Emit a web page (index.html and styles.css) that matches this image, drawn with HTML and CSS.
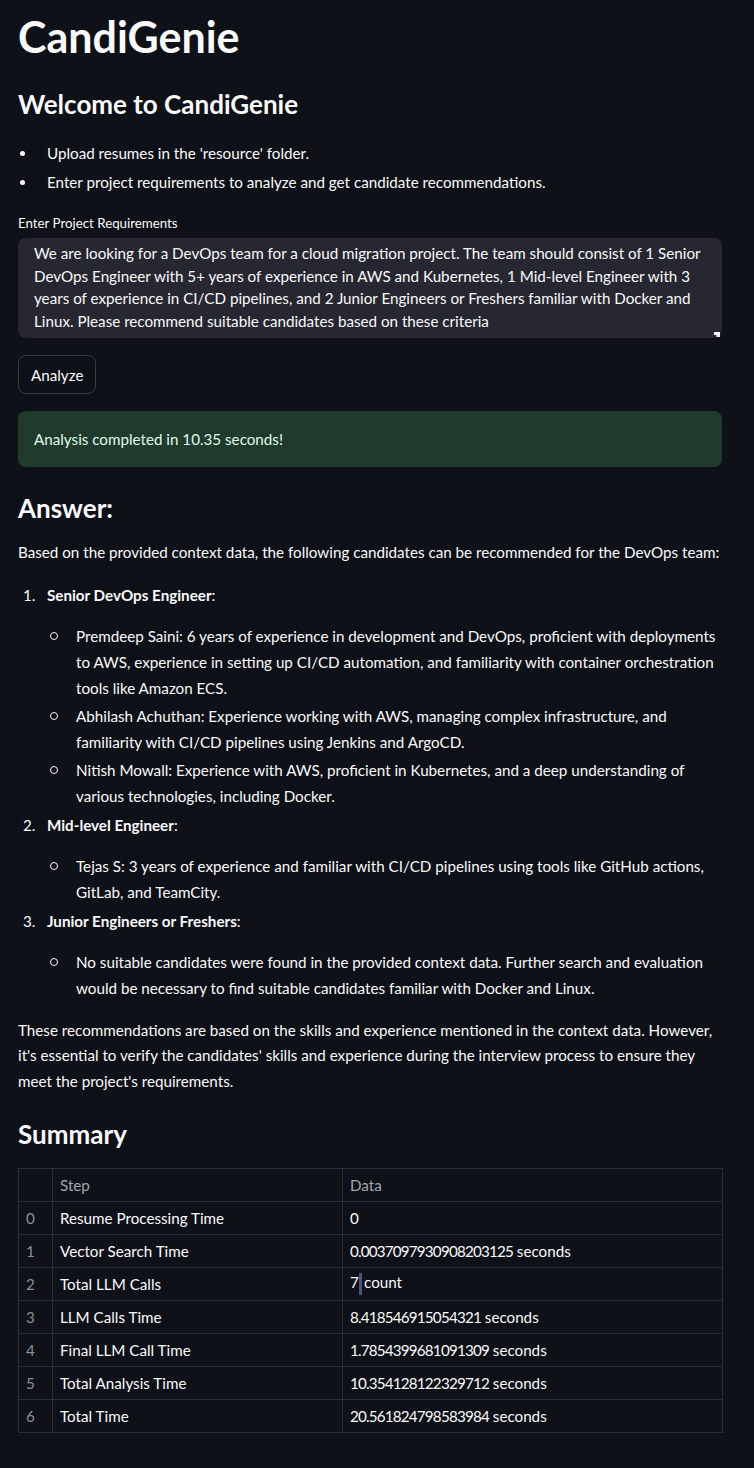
FILE: index.html
```html
<!DOCTYPE html>
<html lang="en">
<head>
<meta charset="utf-8">
<title>CandiGenie</title>
<link rel="stylesheet" href="styles.css">
</head>
<body>
<main class="app">
  <h1 class="title">CandiGenie</h1>
  <h2 class="subtitle">Welcome to CandiGenie</h2>
  <ul class="intro-list">
    <li>Upload resumes in the 'resource' folder.</li>
    <li>Enter project requirements to analyze and get candidate recommendations.</li>
  </ul>

  <label class="field-label" for="req">Enter Project Requirements</label>
  <div class="textarea-wrap">
    <textarea id="req" class="textarea" wrap="off">We are looking for a DevOps team for a cloud migration project. The team should consist of 1 Senior
DevOps Engineer with 5+ years of experience in AWS and Kubernetes, 1 Mid-level Engineer with 3
years of experience in CI/CD pipelines, and 2 Junior Engineers or Freshers familiar with Docker and
Linux. Please recommend suitable candidates based on these criteria</textarea>
    <span class="resize-handle"></span>
  </div>

  <button class="btn" type="button">Analyze</button>

  <div class="alert-success">Analysis completed in 10.35 seconds!</div>

  <h3 class="section-title answer-title">Answer:</h3>
  <p class="para intro-para">Based on the provided context data, the following candidates can be recommended for the DevOps team:</p>

  <ol class="roles">
    <li class="role">
      <div class="role-head"><span class="num">1.</span><span><strong>Senior DevOps Engineer</strong>:</span></div>
      <ul class="cands">
        <li>Premdeep Saini: 6 years of experience in development and DevOps, proficient with deployments<br>to AWS, experience in setting up CI/CD automation, and familiarity with container orchestration<br>tools like Amazon ECS.</li>
        <li>Abhilash Achuthan: Experience working with AWS, managing complex infrastructure, and<br>familiarity with CI/CD pipelines using Jenkins and ArgoCD.</li>
        <li>Nitish Mowall: Experience with AWS, proficient in Kubernetes, and a deep understanding of<br>various technologies, including Docker.</li>
      </ul>
    </li>
    <li class="role">
      <div class="role-head"><span class="num">2.</span><span><strong>Mid-level Engineer</strong>:</span></div>
      <ul class="cands">
        <li>Tejas S: 3 years of experience and familiar with CI/CD pipelines using tools like GitHub actions,<br>GitLab, and TeamCity.</li>
      </ul>
    </li>
    <li class="role">
      <div class="role-head"><span class="num">3.</span><span><strong>Junior Engineers or Freshers</strong>:</span></div>
      <ul class="cands">
        <li>No suitable candidates were found in the provided context data. Further search and evaluation<br>would be necessary to find suitable candidates familiar with Docker and Linux.</li>
      </ul>
    </li>
  </ol>

  <p class="para outro-para">These recommendations are based on the skills and experience mentioned in the context data. However,<br>it's essential to verify the candidates' skills and experience during the interview process to ensure they<br>meet the project's requirements.</p>

  <h3 class="section-title summary-title">Summary</h3>

  <table class="grid">
    <colgroup>
      <col class="c-idx"><col class="c-step"><col class="c-data">
    </colgroup>
    <thead>
      <tr><th></th><th>Step</th><th>Data</th></tr>
    </thead>
    <tbody>
      <tr><td class="idx">0</td><td>Resume Processing Time</td><td><span class="val">0</span></td></tr>
      <tr><td class="idx">1</td><td>Vector Search Time</td><td><span class="val">0.0037097930908203125</span> seconds</td></tr>
      <tr><td class="idx">2</td><td>Total LLM Calls</td><td><span class="val">7</span><span class="caret"></span>count</td></tr>
      <tr><td class="idx">3</td><td>LLM Calls Time</td><td><span class="val">8.418546915054321</span> seconds</td></tr>
      <tr><td class="idx">4</td><td>Final LLM Call Time</td><td><span class="val">1.7854399681091309</span> seconds</td></tr>
      <tr><td class="idx">5</td><td>Total Analysis Time</td><td><span class="val">10.354128122329712</span> seconds</td></tr>
      <tr><td class="idx">6</td><td>Total Time</td><td><span class="val">20.561824798583984</span> seconds</td></tr>
    </tbody>
  </table>
</main>
</body>
</html>
```

FILE: styles.css
```css
* { box-sizing: border-box; }

html, body {
  margin: 0;
  padding: 0;
  background: #0e1117;
}

body {
  color: #fafafa;
  font-family: Lato, "Noto Sans", sans-serif;
  font-size: 15.2px;
}

.app {
  padding: 11px 32px 40px 18px;
}

.title {
  margin: 0;
  font-size: 43px;
  line-height: 52px;
  font-weight: 700;
}

.subtitle {
  margin: 24px 0 0;
  font-size: 26px;
  line-height: 34px;
  font-weight: 700;
}

.intro-list {
  list-style: none;
  margin: 19px 0 0;
  padding: 0 0 0 29px;
}

.intro-list li {
  line-height: 26px;
}

.intro-list li + li { margin-top: 3px; }

.intro-list li::before {
  content: "";
  display: inline-block;
  width: 5px;
  height: 5px;
  margin-left: -27px;
  margin-right: 22px;
  border-radius: 50%;
  background: #fafafa;
  vertical-align: 3px;
}

.field-label {
  display: block;
  margin-top: 18px;
  font-size: 13.3px;
  line-height: 20px;
}

.textarea-wrap {
  position: relative;
  margin-top: 5px;
}

.textarea {
  display: block;
  width: 100%;
  height: 100px;
  margin: 0;
  padding: 4px 16px;
  background: #262730;
  color: #fafafa;
  border: none;
  border-radius: 8px;
  font-family: inherit;
  font-size: 15.2px;
  line-height: 22.67px;
  white-space: pre;
  overflow: hidden;
  resize: none;
  outline: none;
}

.resize-handle {
  position: absolute;
  right: 2px;
  bottom: 1px;
  width: 6px;
  height: 5px;
  background: #f2f2f2;
  clip-path: polygon(0 0, 100% 0, 100% 100%, 40% 100%, 40% 60%, 0 60%);
}

.btn {
  display: block;
  margin-top: 17px;
  height: 39px;
  padding: 0 12px;
  background: transparent;
  color: #fafafa;
  border: 1px solid #3a3c43;
  border-radius: 8px;
  font-family: inherit;
  font-size: 15.2px;
}

.alert-success {
  margin-top: 17px;
  height: 56px;
  padding: 0 16px;
  display: flex;
  align-items: center;
  background: #203a2b;
  color: #dffde9;
  border-radius: 8px;
}

.section-title {
  margin: 0;
  font-size: 26px;
  line-height: 34px;
  font-weight: 700;
}

.answer-title { margin-top: 24px; }

.para {
  margin: 0;
  line-height: 25.6px;
  white-space: nowrap;
}

.intro-para { margin-top: 15px; }

.roles {
  list-style: none;
  margin: 16px 0 0;
  padding: 0;
}

.role + .role { margin-top: 3px; }

.role-head {
  display: flex;
  line-height: 26px;
}

.role-head strong { font-weight: 700; }

.num {
  width: 29px;
  padding-left: 5px;
}

.cands {
  list-style: none;
  margin: 15px 0 0;
  padding: 0 0 0 58px;
}

.cands li {
  line-height: 26px;
  white-space: nowrap;
}

.cands li + li { margin-top: 2px; }

.cands li::before {
  content: "";
  display: inline-block;
  width: 6px;
  height: 6px;
  margin-left: -26px;
  margin-right: 18px;
  border: 1px solid #fafafa;
  border-radius: 50%;
  vertical-align: 2px;
}

.outro-para { margin-top: 17px; }

.summary-title { margin-top: 23px; }

.grid {
  margin-top: 17px;
  width: 704px;
  border-collapse: collapse;
  table-layout: fixed;
}

.c-idx { width: 34px; }
.c-step { width: 290px; }
.c-data { width: 380px; }

.grid th,
.grid td {
  height: 33px;
  padding: 0 7px;
  border: 1px solid #2b2d34;
  text-align: left;
  vertical-align: middle;
  white-space: nowrap;
  font-weight: 400;
}

.grid th { color: #a3a6ad; }

.grid td.idx { color: #8c8f96; }

.val { letter-spacing: -0.8px; }

.caret {
  display: inline-block;
  width: 3px;
  height: 22px;
  margin: 0 2px 0 1px;
  vertical-align: middle;
  background: #45567d;
}
```
